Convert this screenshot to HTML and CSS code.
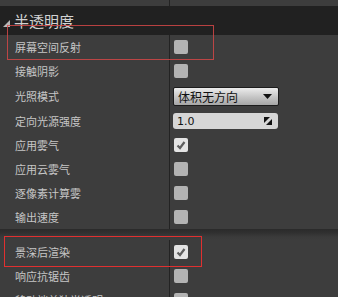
FILE: index.html
```html
<!DOCTYPE html>
<html>
<head>
<meta charset="utf-8">
<link rel="stylesheet" href="styles.css">
</head>
<body>
<div class="panel">
  <div class="strip"><div class="lab"></div><div class="val"></div></div>
  <div class="header">
    <svg class="tri" width="7" height="7" viewBox="0 0 7 7"><polygon points="7,0 7,7 0,7" fill="#b8b8b8"/></svg>
    <span class="htext">半透明度</span>
  </div>
  <div class="section">
    <div class="row"><div class="lab">屏幕空间反射</div><div class="val"><span class="cb"></span></div></div>
    <div class="row"><div class="lab">接触阴影</div><div class="val"><span class="cb"></span></div></div>
    <div class="row tall"><div class="lab">光照模式</div><div class="val">
      <div class="combo"><span>体积无方向</span><svg width="9" height="5" viewBox="0 0 9 5"><polygon points="0,0 9,0 4.5,5" fill="#111"/></svg></div>
    </div></div>
    <div class="row"><div class="lab">定向光源强度</div><div class="val">
      <div class="num"><span>1.0</span><svg width="8" height="8" viewBox="0 0 8 8"><polygon points="0,0 6,0 0,6" fill="#111"/><polygon points="8,2 8,8 2,8" fill="#111"/></svg></div>
    </div></div>
    <div class="row"><div class="lab">应用雾气</div><div class="val"><span class="cb on"><svg width="14" height="14" viewBox="0 0 14 14"><polyline points="3.5,7.5 6,10 10.5,4" fill="none" stroke="#5e5e5e" stroke-width="2.2"/></svg></span></div></div>
    <div class="row"><div class="lab">应用云雾气</div><div class="val"><span class="cb"></span></div></div>
    <div class="row"><div class="lab">逐像素计算雾</div><div class="val"><span class="cb"></span></div></div>
    <div class="row"><div class="lab">输出速度</div><div class="val"><span class="cb"></span></div></div>
  </div>
  <div class="sep"></div>
  <div class="section">
    <div class="row"><div class="lab">景深后渲染</div><div class="val"><span class="cb on"><svg width="14" height="14" viewBox="0 0 14 14"><polyline points="3.5,7.5 6,10 10.5,4" fill="none" stroke="#5e5e5e" stroke-width="2.2"/></svg></span></div></div>
    <div class="row"><div class="lab">响应抗锯齿</div><div class="val"><span class="cb"></span></div></div>
    <div class="row"><div class="lab">移动端单独半透明</div><div class="val"><span class="cb"></span></div></div>
  </div>
  <div class="mark mark1"></div>
  <div class="mark mark2"></div>
</div>
</body>
</html>
```

FILE: styles.css
```css
html, body {
  margin: 0;
  padding: 0;
  background: #3d3d3d;
  overflow: hidden;
}
.panel {
  position: relative;
  width: 338px;
  height: 297px;
  overflow: hidden;
  font-family: "Noto Sans CJK SC", "Noto Sans", sans-serif;
  color: #c6c6c6;
}
.strip {
  display: grid;
  grid-template-columns: 169px 1fr;
  height: 6px;
}
.strip .val, .row .val {
  border-left: 1px solid #232323;
}
.header {
  height: 29px;
  background: #212121;
  display: flex;
  align-items: center;
}
.tri {
  margin-left: 3px;
  margin-top: 5px;
}
.htext {
  margin-left: 4px;
  font-size: 15px;
  color: #d2d2d2;
  line-height: 1;
}
.row {
  display: grid;
  grid-template-columns: 169px 1fr;
  height: 24px;
}
.row.tall {
  height: 26px;
}
.lab {
  font-size: 11px;
  display: flex;
  align-items: center;
  padding-left: 15px;
  white-space: nowrap;
}
.val {
  display: flex;
  align-items: center;
  padding-left: 4px;
}
.cb {
  width: 14px;
  height: 14px;
  border-radius: 2px;
  background: #b3b3b3;
  display: block;
}
.cb.on {
  background: #e4e4e4;
}
.cb svg {
  display: block;
}
.combo {
  margin-left: -1px;
  width: 102px;
  height: 17px;
  border: 1px solid #1c1c1c;
  border-radius: 2px;
  background: linear-gradient(#ececec, #c4c4c4 55%, #a6a6a6);
  display: flex;
  align-items: center;
  justify-content: space-between;
  padding: 0 6px 0 4px;
  box-sizing: content-box;
  width: 94px;
  font-size: 12px;
  color: #111;
  margin-top: 1px;
}
.num {
  margin-left: -1px;
  width: 105px;
  height: 16px;
  box-sizing: border-box;
  border-radius: 3px;
  background: #d6d6d6;
  display: flex;
  align-items: center;
  justify-content: space-between;
  padding: 0 6px 0 4px;
  font-family: "DejaVu Sans", sans-serif;
  font-size: 11px;
  color: #111;
}
.sep {
  height: 11px;
  background: linear-gradient(#2a2a2a, #303030 35%, #3a3a3a 70%, #3d3d3d);
}
.mark {
  position: absolute;
  border: 1px solid #c83a3a;
  box-sizing: border-box;
}
.mark1 {
  left: 7px;
  top: 25px;
  width: 207px;
  height: 35px;
  border-color: rgba(210, 70, 70, 0.85);
}
.mark2 {
  left: 4px;
  top: 236px;
  width: 198px;
  height: 31px;
  border-color: #e03030;
}
```
